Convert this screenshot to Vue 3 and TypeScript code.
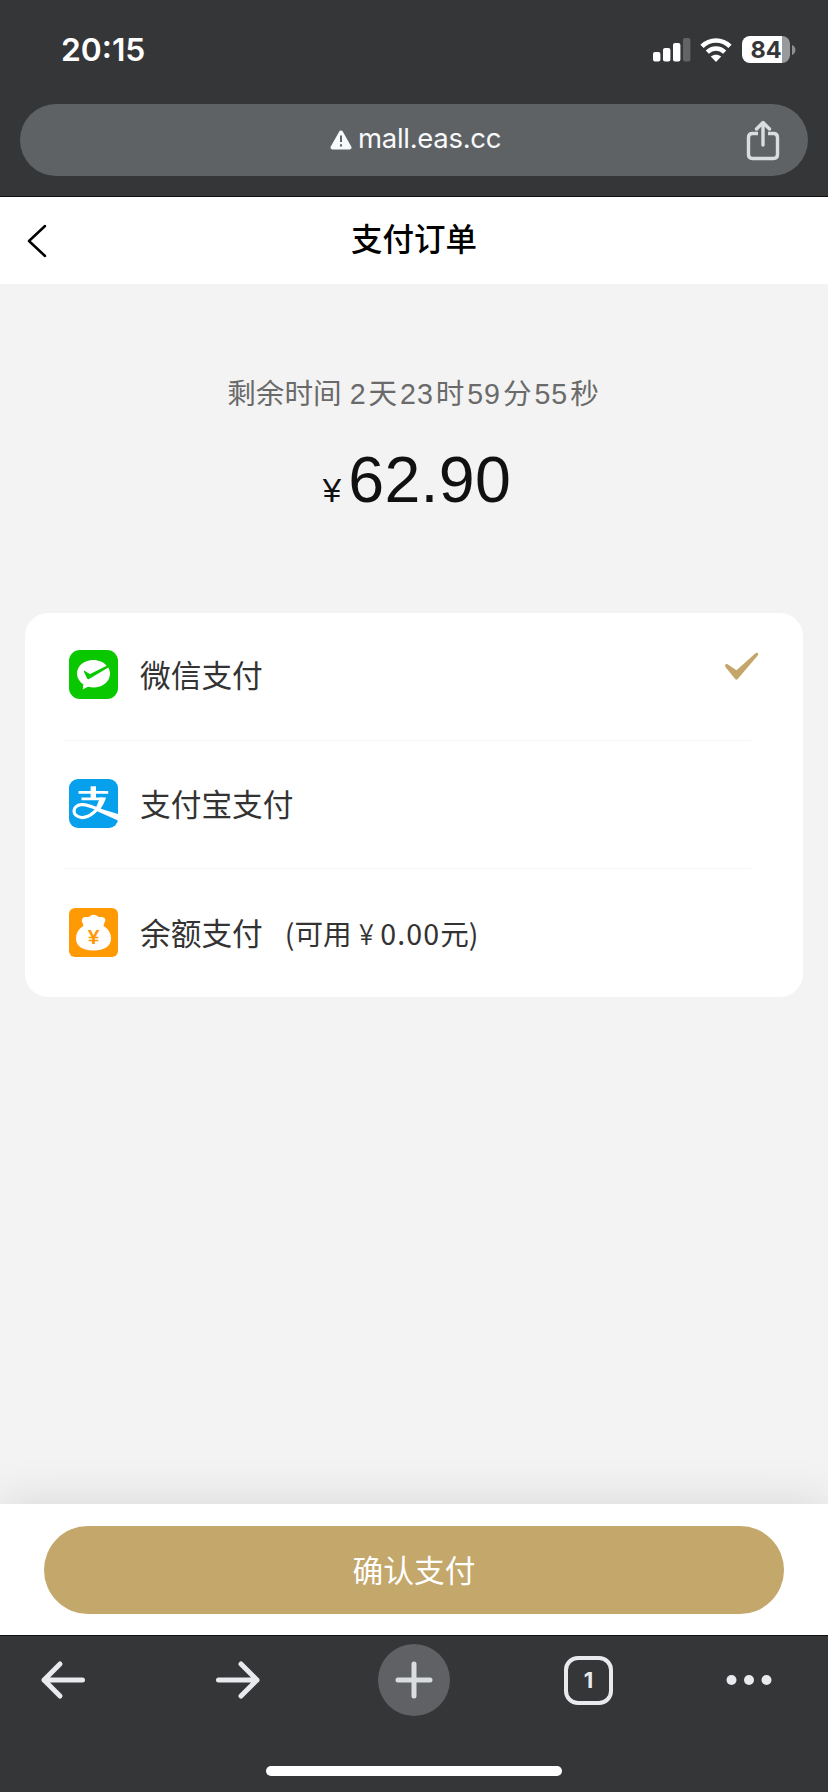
<script setup lang="ts">
import { ref } from 'vue'

interface PayMethod {
  id: 'wechat' | 'alipay' | 'balance'
  name: string
  available?: string
}

const methods: PayMethod[] = [
  { id: 'wechat', name: '微信支付' },
  { id: 'alipay', name: '支付宝支付' },
  { id: 'balance', name: '余额支付', available: '0.00' },
]
const selected = ref<PayMethod['id']>('wechat')

const countdown = [
  { value: '2', unit: '天' },
  { value: '23', unit: '时' },
  { value: '59', unit: '分' },
  { value: '55', unit: '秒' },
]
</script>

<template>
  <div class="screen">
    <header class="chrome-top">
      <div class="status">
        <span class="clock">20:15</span>
        <div class="indicators">
          <svg class="signal" width="38" height="24" viewBox="0 0 38 24">
            <rect x="0" y="14" width="7.4" height="9.4" rx="2" fill="#fff" />
            <rect x="10" y="10" width="7.4" height="13.4" rx="2" fill="#fff" />
            <rect x="20" y="5" width="7.4" height="18.4" rx="2" fill="#fff" />
            <rect x="30" y="0" width="7.4" height="23.4" rx="2" fill="#636465" />
          </svg>
          <svg class="wifi" width="32" height="24" viewBox="0 0 32 24">
            <path d="M2 8.3C9.8 .5 22.2 .5 30 8.3" fill="none" stroke="#fff" stroke-width="4.6" />
            <path d="M7.3 14.1c4.9-4.8 12.5-4.8 17.4 0" fill="none" stroke="#fff" stroke-width="4.5" />
            <path d="M10.8 18.6c3-2.6 7.4-2.6 10.4 0L16 24Z" fill="#fff" />
          </svg>
          <div class="battery"><span class="level">84</span></div>
          <svg class="nub" width="4" height="10" viewBox="0 0 4 10"><path d="M0 0c4.600 1.500 4.600 8.500 0 10Z" fill="#8e8f90" /></svg>
        </div>
      </div>
      <div class="address">
        <svg class="warn" width="22" height="20" viewBox="0 0 22 20">
          <path d="M11 2.500 19.500 17.500H2.500Z" fill="#f8f9fa" stroke="#f8f9fa" stroke-width="4" stroke-linejoin="round" />
          <path d="M11 5.500v6.500M11 14.200v2.200" stroke="#5f6264" stroke-width="2" />
        </svg>
        <span class="host">mall.eas.cc</span>
        <svg class="share" width="34" height="42" viewBox="0 0 34 42" fill="none" stroke="#dadde0" stroke-width="3.400">
          <path d="M12 13.500H6.500Q2.500 13.500 2.500 17.500V34.500Q2.500 38.500 6.500 38.500H27.500Q31.500 38.500 31.500 34.500V17.500Q31.500 13.500 27.500 13.500H22" />
          <path d="M17 25V3M10.500 9 17 2.500 23.500 9" stroke-linecap="round" stroke-linejoin="round" />
        </svg>
      </div>
    </header>

    <nav class="titlebar">
      <svg class="back" width="20" height="34" viewBox="0 0 20 34">
        <path d="M18 2 2 17 18 32" fill="none" stroke="#000" stroke-width="2.500" stroke-linecap="round" stroke-linejoin="round" />
      </svg>
      <h1>支付订单</h1>
    </nav>

    <main class="content">
      <p class="remain">
        <span class="remain-label">剩余时间</span>
        <template v-for="part in countdown" :key="part.unit">
          <span class="digits">{{ part.value }}</span><span class="unit">{{ part.unit }}</span>
        </template>
      </p>
      <p class="amount"><span class="yen">¥</span><span class="value">62.90</span></p>

      <ul class="methods">
        <li v-for="m in methods" :key="m.id" class="method" @click="selected = m.id">
          <svg v-if="m.id === 'wechat'" class="logo" viewBox="0 0 49 49">
            <rect width="49" height="49" rx="11" fill="#09c800" />
            <path d="M24.500 10C15.400 10 8 15.800 8 23.600c0 4.500 2.300 8.200 6.400 10.800l-.7 5.200 5.300-2.900c1.800.5 3.600.8 5.500.8C33.600 37.500 41 31.600 41 23.800c0-2.300-.6-4.400-1.700-6.200L20 29c-.9.500-1.500.2-1.900-.6L14.900 21.700c-.2-.7.5-1.100 1-.7l4 2.600c.6.4 1.200.4 1.800.2L37.700 15.700C34.600 12.200 29.800 10 24.500 10Z" fill="#fff" />
          </svg>
          <svg v-else-if="m.id === 'alipay'" class="logo" viewBox="0 0 49 49">
            <rect width="49" height="49" rx="9" fill="#06a0ec" />
            <g fill="none" stroke="#fff">
              <path d="M24.300 7.300V19.500" stroke-width="5.400" />
              <path d="M9.500 13.300H39.200M12.500 19.800H34" stroke-width="2.700" />
              <path d="M33.500 20C30 31 20.500 39 12.500 38.500 2.500 37.500 2.500 26.500 12.500 25.600 19 25 26 29 33 32" stroke-width="3.200" />
            </g>
            <path d="M31 18.500H37C35.500 23.500 33.600 27 31.500 29.800L49 35V41.600L26 31.200Z" fill="#fff" />
          </svg>
          <svg v-else class="logo" viewBox="0 0 49 49">
            <rect width="49" height="49" rx="6" fill="#ff9a05" />
            <path d="M14.500 18C14 16.700 14 16 13.500 14.500 11.800 12 13.500 8.500 17 9 19 9.200 20.500 9 21.500 7.800 23.500 6.300 26 6.300 28 7.800 29 9 30.500 9.200 32 9 36 8.500 37.500 12 35.500 14.500 35 16 35 16.700 34.500 18 39 20.500 42 25 42 30.500 42 38.500 35 42.500 24.500 42.500S7 38.500 7 30.500C7 25 10 20.500 14.500 18Z" fill="#fff" />
            <text x="24.500" y="35.700" text-anchor="middle" font-family="Liberation Sans, sans-serif" font-size="21" font-weight="700" fill="#ff9a05">¥</text>
          </svg>
          <span class="name">{{ m.name }}</span>
          <span v-if="m.available" class="note">(可用<span class="wide-yen">￥</span><span class="sum">{{ m.available }}</span>元)</span>
          <svg v-if="selected === m.id" class="tick" width="34" height="28" viewBox="0 0 34 28">
            <path d="M2.600 12.300 11.500 18.300 30.500 1.200C32.200-.2 34.200 1.500 32.700 3.400L12.700 27C11.800 28 11 28 10.200 27L.8 15.500C-.8 13.200.7 11.200 2.600 12.300Z" fill="#c4a66a" />
          </svg>
        </li>
      </ul>
    </main>

    <footer class="paybar">
      <button class="confirm" type="button">确认支付</button>
    </footer>

    <div class="toolbar">
      <div class="tools">
        <svg width="46" height="40" viewBox="0 0 46 40" fill="none" stroke="#e8eaed" stroke-width="5" stroke-linecap="round" stroke-linejoin="round">
          <path d="M42.500 20H4M20 4 4 20 20 36" />
        </svg>
        <svg class="forward" width="46" height="40" viewBox="0 0 46 40" fill="none" stroke="#e8eaed" stroke-width="5" stroke-linecap="round" stroke-linejoin="round">
          <path d="M3.500 20H42M26 4 42 20 26 36" />
        </svg>
        <span class="plus">
          <svg width="38" height="38" viewBox="0 0 38 38" stroke="#dadde0" stroke-width="5" stroke-linecap="round">
            <path d="M19 3V35M3 19H35" />
          </svg>
        </span>
        <span class="tabs">1</span>
        <svg class="more" width="46" height="12" viewBox="0 0 46 12" fill="#e8eaed">
          <circle cx="5.500" cy="6" r="5" /><circle cx="23" cy="6" r="5" /><circle cx="40.500" cy="6" r="5" />
        </svg>
      </div>
      <div class="home"></div>
    </div>
  </div>
</template>

<style>
body {
  margin: 0;
}
</style>

<style scoped>
.screen {
  width: 828px;
  height: 1792px;
  display: flex;
  flex-direction: column;
  overflow: hidden;
  background: #f3f3f3;
  font-family: "Liberation Sans", "Noto Sans CJK SC", sans-serif;
}
svg {
  display: block;
  flex: none;
}
.chrome-top {
  height: 196px;
  flex: none;
  background: #353638;
  border-bottom: 1px solid #101010;
}
.status {
  height: 104px;
  box-sizing: border-box;
  padding: 30px 32px 0 61px;
  display: flex;
  justify-content: space-between;
  align-items: flex-start;
  color: #fff;
}
.clock {
  font: 600 31.800px/40px Inter, sans-serif;
}
.indicators {
  height: 40px;
  display: flex;
  align-items: center;
}
.wifi {
  margin-left: 9px;
}
.battery {
  width: 48px;
  height: 27px;
  margin: -1px 0 0 10px;
  border-radius: 8px;
  background: linear-gradient(90deg, #fff 40px, #999a9b 40px);
  color: #353638;
  text-align: center;
}
.level {
  display: block;
  font: 700 23.500px/27px Inter, sans-serif;
}
.nub {
  margin-left: 2px;
}
.address {
  height: 72px;
  margin: 0 20px;
  border-radius: 36px;
  background: #5f6264;
  display: flex;
  align-items: center;
}
.warn {
  margin-left: 310px;
}
.host {
  margin: -4px 0 0 6px;
  flex: 1;
  color: #f8f9fa;
  font: 400 27.500px/40px Inter, sans-serif;
  letter-spacing: -0.300px;
}
.share {
  margin: 2px 28px 0 0;
}
.titlebar {
  height: 87px;
  flex: none;
  background: #fff;
  display: grid;
  grid-template-columns: 47px 1fr 47px;
  align-items: center;
}
.back {
  margin-left: 27px;
}
h1 {
  margin: -8px 0 0;
  text-align: center;
  font-size: 31.500px;
  font-weight: 500;
  line-height: 44px;
  font-family: "Noto Sans CJK SC", sans-serif;
}
.content {
  flex: 1;
  padding: 90px 25px 0;
}
.remain {
  margin: 0;
  height: 40px;
  padding-right: 2px;
  display: flex;
  justify-content: center;
  font-size: 28.600px;
  line-height: 40px;
  color: #6a6a6a;
}
.remain-label {
  margin-right: 5px;
}
.digits {
  padding-left: 3px;
  letter-spacing: 0.900px;
}
.unit {
  padding-left: 2px;
}
.amount {
  margin: 26px 0 0;
  height: 80px;
  padding-left: 6px;
  display: flex;
  justify-content: center;
  align-items: baseline;
  gap: 7px;
  font-size: 64.500px;
  line-height: 81px;
  color: #111;
}
.value {
  letter-spacing: 0.300px;
}
.yen {
  font-size: 33px;
}
.methods {
  list-style: none;
  margin: 93px 0 0;
  padding: 0 52px 0 39px;
  height: 384px;
  border-radius: 23px;
  background: #fff;
}
.method {
  height: 128px;
  box-sizing: border-box;
  display: flex;
  align-items: center;
  border-bottom: 1px solid #f6f6f6;
  font-family: "Noto Sans CJK SC", sans-serif;
  color: #333;
}
.method:not(:first-child) {
  padding-top: 2px;
}
.method:last-child {
  border: 0;
}
.logo {
  width: 49px;
  height: 49px;
  margin: -4px 0 0 5px;
}
.name {
  margin: -5px 0 0 22px;
  font-size: 30.700px;
  line-height: 44px;
}
.note {
  margin: -3px 0 0 22px;
  font-size: 28.600px;
  line-height: 44px;
}
.wide-yen {
  display: inline-block;
  transform: scaleX(0.76);
}
.sum {
  letter-spacing: 1.100px;
}
.tick {
  margin: -21px -8px 0 auto;
}
.paybar {
  height: 131px;
  flex: none;
  box-sizing: border-box;
  padding: 22px 44px;
  background: #fff;
  box-shadow: 0 0 50px rgba(0, 0, 0, 0.12);
}
.confirm {
  display: block;
  width: 100%;
  height: 88px;
  border: 0;
  border-radius: 44px;
  background: #c3a76b;
  color: #fff;
  font: 400 30.700px/86px "Noto Sans CJK SC", sans-serif;
  padding: 0 0 2px;
}
.toolbar {
  height: 157px;
  flex: none;
  box-sizing: border-box;
  border-top: 1px solid #101010;
  background: #353638;
}
.tools {
  height: 88px;
  padding-left: 40px;
  display: flex;
  align-items: center;
}
.forward {
  margin-left: 129px;
}
.plus {
  width: 72px;
  height: 72px;
  margin-left: 117px;
  border-radius: 50%;
  background: #5f6165;
  display: flex;
  align-items: center;
  justify-content: center;
}
.tabs {
  width: 49px;
  height: 49px;
  margin-left: 114px;
  box-sizing: border-box;
  border: 4.500px solid #e8eaed;
  border-radius: 14px;
  color: #e8eaed;
  font: 700 22px/41px Inter, sans-serif;
  text-align: center;
}
.more {
  margin-left: 113px;
}
.home {
  width: 296px;
  height: 10px;
  margin: 42px auto 0;
  border-radius: 5px;
  background: #fff;
}
</style>
